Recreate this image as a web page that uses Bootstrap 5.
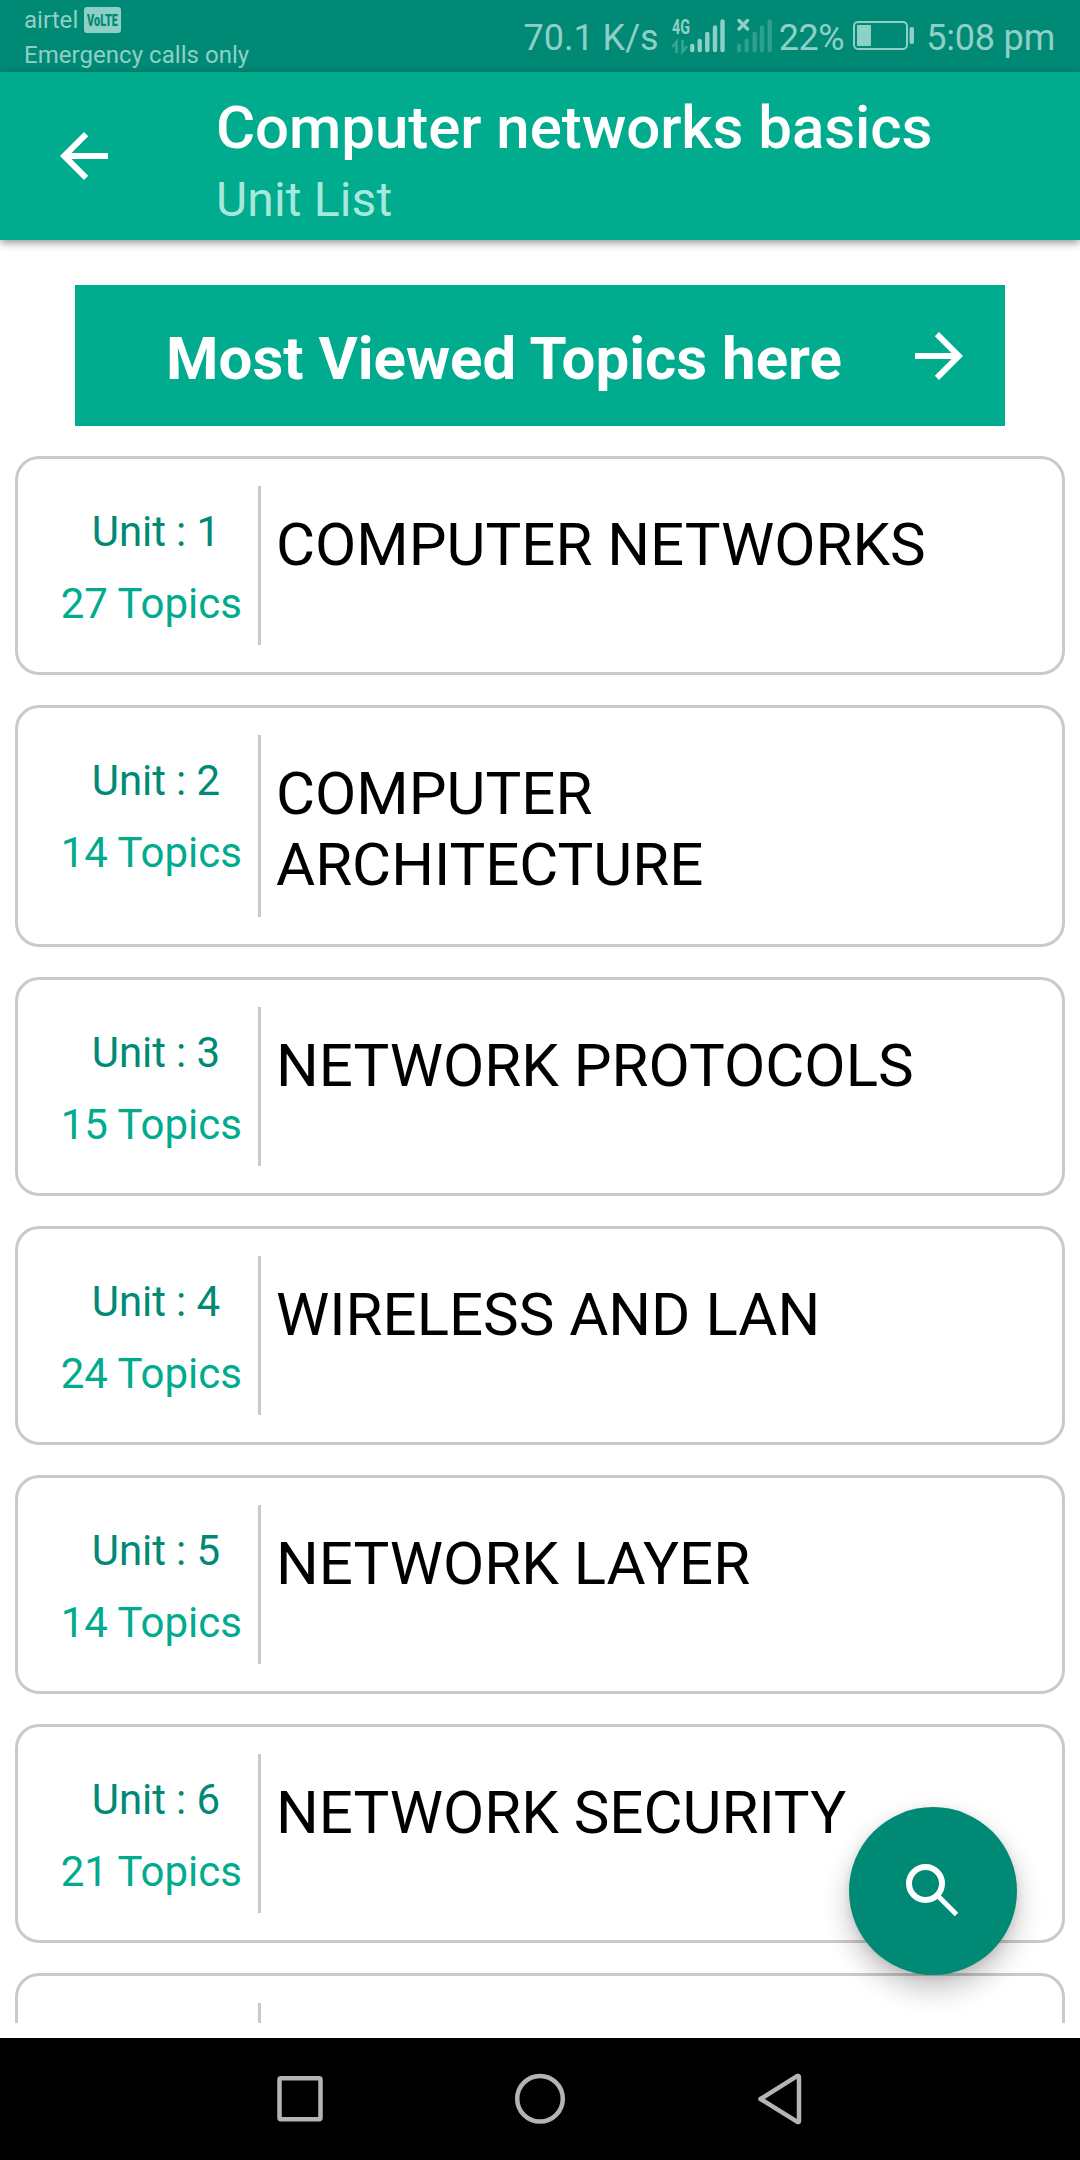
<!DOCTYPE html>
<html lang="en">
<head>
<meta charset="utf-8">
<meta name="viewport" content="width=device-width, initial-scale=1">
<title>Computer networks basics</title>
<link href="https://cdn.jsdelivr.net/npm/bootstrap@5.3.0/dist/css/bootstrap.min.css" rel="stylesheet">
<style>
  :root { --teal: #00ab8e; --teal-dark: #008975; --line: #cacaca; --status: #8fd0c6; }
  body { font-family: Roboto, "Liberation Sans", sans-serif; color: #000; background: #fff; }
  .screen { width: 1080px; height: 2160px; }
  .status-bar { height: 72px; background: var(--teal-dark); color: var(--status); padding: 0 25px 0 24px; }
  .carrier { font-size: 24px; line-height: 35px; padding-top: 4px; letter-spacing: .04px; }
  .volte { width: 37px; height: 26px; margin-left: 6px; overflow: visible; }
  .status-right { font-size: 36px; line-height: 42px; }
  .status-right span { padding-top: 3px; }
  .percent { letter-spacing: -.4px; }
  .clock { letter-spacing: -.2px; }
  .battery { margin: 0 11px 0 9px; }
  .app-bar { height: 168px; background: var(--teal); box-shadow: 0 3px 8px rgba(0,0,0,.4); padding-left: 48px; z-index: 2; }
  .app-bar svg { margin-right: 96px; }
  .app-heading { padding-top: 8px; }
  .app-title { font-size: 60px; line-height: 70px; font-weight: 500; letter-spacing: -.05px; }
  .app-sub { font-size: 48px; line-height: 56px; color: #a6e9dc; padding-top: 9px; letter-spacing: .15px; }
  .content { height: 1783px; padding: 45px 15px 0; }
  .most-viewed { height: 141px; margin: 0 60px 30px; background: var(--teal); border-radius: 0; font-size: 60px; line-height: 70px; padding: 0 30px 0 91px; flex-shrink: 0; }
  .most-viewed:hover { background: var(--teal); }
  .most-viewed span { padding-top: 6px; }
  .unit { border: 3px solid var(--line); border-radius: 24px; padding: 27px 0; margin-bottom: 30px; min-height: 219px; flex-shrink: 0; }
  .unit-tall { min-height: 242px; }
  .unit-meta { width: 243px; border-right: 3px solid var(--line); font-size: 42px; line-height: 72px; padding: 10px 16px 0 0; }
  .unit-rows { height: 144px; margin-bottom: -10px; }
  .unit-no { color: var(--teal-dark); padding-right: 22px; letter-spacing: -.1px; }
  .unit-count { color: var(--teal); }
  .unit-name { font-size: 60px; line-height: 71px; padding: 23px 45px 0 15px; }
  .fab { right: 63px; top: 1807px; width: 168px; height: 168px; background: var(--teal-dark); box-shadow: 0 14px 28px rgba(0,0,0,.24), 0 2px 8px rgba(0,0,0,.1); z-index: 3; }
  .nav-keys { height: 122px; margin-top: 15px; }
</style>
</head>
<body>
<div class="screen position-relative overflow-hidden">
  <div class="status-bar d-flex justify-content-between align-items-center">
    <div class="carrier">
      <div class="d-flex align-items-center"><span>airtel</span>
        <svg class="volte" viewBox="0 0 37 26"><rect y="-1" width="37" height="26" rx="3" fill="#8fd0c6"/><text x="3" y="18" font-size="16" font-weight="900" fill="#008975" textLength="31" lengthAdjust="spacingAndGlyphs">VoLTE</text></svg>
      </div>
      <div>Emergency calls only</div>
    </div>
    <div class="status-right d-flex align-items-center">
      <span>70.1 K/s</span>
      <svg class="ms-2" width="112" height="40" viewBox="668 16 112 40" fill="none" stroke-linecap="round">
        <text x="673" y="33.500" font-size="20" font-weight="700" fill="#8fd0c6" textLength="18" lengthAdjust="spacingAndGlyphs">4G</text>
        <path d="M674 46l3.500-4v10M683.500 41v10.500l4-4.500" stroke="#3aa595" stroke-width="2.600"/>
        <path d="M693.3 46v4M700.7 41v9M708.3 34v16M716 27.500v22.500M723.500 21.500v28.500" stroke="#8fd0c6" stroke-width="4.400"/>
        <path d="M740 46v4M747.700 41v9M755.700 34v16M763 27.500v22.500M770.700 21.500v28.500" stroke="#2f9f8e" stroke-width="4.400"/>
        <path d="M740 20.500l8.500 8.500M748.500 20.500l-8.500 8.500" stroke="#8fd0c6" stroke-width="3.400"/>
      </svg>
      <span class="percent">22%</span>
      <svg class="battery" width="62" height="30" viewBox="0 0 62 30"><rect x="1" y="1" width="53" height="27" rx="4" fill="none" stroke="#8fd0c6" stroke-width="2"/><rect x="4" y="4" width="14" height="21" rx="1" fill="#8fd0c6"/><rect x="56.500" y="6" width="4.500" height="17" rx="2" fill="#8fd0c6"/></svg>
      <span class="clock">5:08 pm</span>
    </div>
  </div>
  <header class="app-bar d-flex align-items-center text-white position-relative">
    <svg width="72" height="72" viewBox="0 0 24 24" fill="#fff"><path d="M20 11H7.830l5.590-5.590L12 4l-8 8 8 8 1.410-1.410L7.830 13H20v-2z"/></svg>
    <div class="app-heading">
      <div class="app-title">Computer networks basics</div>
      <div class="app-sub">Unit List</div>
    </div>
  </header>
  <main class="content d-flex flex-column overflow-hidden">
    <a class="most-viewed btn d-flex align-items-center justify-content-between text-white fw-bold border-0" href="#">
      <span>Most Viewed Topics here</span>
      <svg width="72" height="72" viewBox="0 0 24 24" fill="#fff"><path d="M12 4l-1.410 1.410L16.170 11H4v2h12.170l-5.580 5.590L12 20l8-8z"/></svg>
    </a>
    <div class="unit d-flex"><div class="unit-meta text-end flex-shrink-0"><div class="unit-rows"><div class="unit-no">Unit : 1</div><div class="unit-count">27 Topics</div></div></div><div class="unit-name">COMPUTER NETWORKS</div></div>
    <div class="unit unit-tall d-flex"><div class="unit-meta text-end flex-shrink-0"><div class="unit-rows"><div class="unit-no">Unit : 2</div><div class="unit-count">14 Topics</div></div></div><div class="unit-name">COMPUTER ARCHITECTURE</div></div>
    <div class="unit d-flex"><div class="unit-meta text-end flex-shrink-0"><div class="unit-rows"><div class="unit-no">Unit : 3</div><div class="unit-count">15 Topics</div></div></div><div class="unit-name">NETWORK PROTOCOLS</div></div>
    <div class="unit d-flex"><div class="unit-meta text-end flex-shrink-0"><div class="unit-rows"><div class="unit-no">Unit : 4</div><div class="unit-count">24 Topics</div></div></div><div class="unit-name">WIRELESS AND LAN</div></div>
    <div class="unit d-flex"><div class="unit-meta text-end flex-shrink-0"><div class="unit-rows"><div class="unit-no">Unit : 5</div><div class="unit-count">14 Topics</div></div></div><div class="unit-name">NETWORK LAYER</div></div>
    <div class="unit d-flex"><div class="unit-meta text-end flex-shrink-0"><div class="unit-rows"><div class="unit-no">Unit : 6</div><div class="unit-count">21 Topics</div></div></div><div class="unit-name">NETWORK SECURITY</div></div>
    <div class="unit d-flex"><div class="unit-meta"></div></div>
  </main>
  <button class="fab btn rounded-circle border-0 p-0 position-absolute d-flex align-items-center justify-content-center" aria-label="Search">
    <svg width="72" height="72" viewBox="0 0 72 72" fill="none" stroke="#fff"><circle cx="28.500" cy="28.500" r="16.500" stroke-width="6"/><path d="M41 41l18.500 18.500" stroke-width="5"/></svg>
  </button>
  <nav class="nav-keys bg-black">
    <svg width="1080" height="122" viewBox="0 2038 1080 122" fill="none" stroke="#b4b4b4" stroke-width="4.500" stroke-linejoin="round">
      <rect x="279.500" y="2078.200" width="41" height="41" rx="1.500"/>
      <circle cx="540" cy="2098.800" r="22.800"/>
      <path d="M760.500 2099L797 2076.200q2-1 2 1v43.500q0 2-2 1z"/>
    </svg>
  </nav>
</div>
<script src="https://cdn.jsdelivr.net/npm/bootstrap@5.3.0/dist/js/bootstrap.bundle.min.js"></script>
</body>
</html>
